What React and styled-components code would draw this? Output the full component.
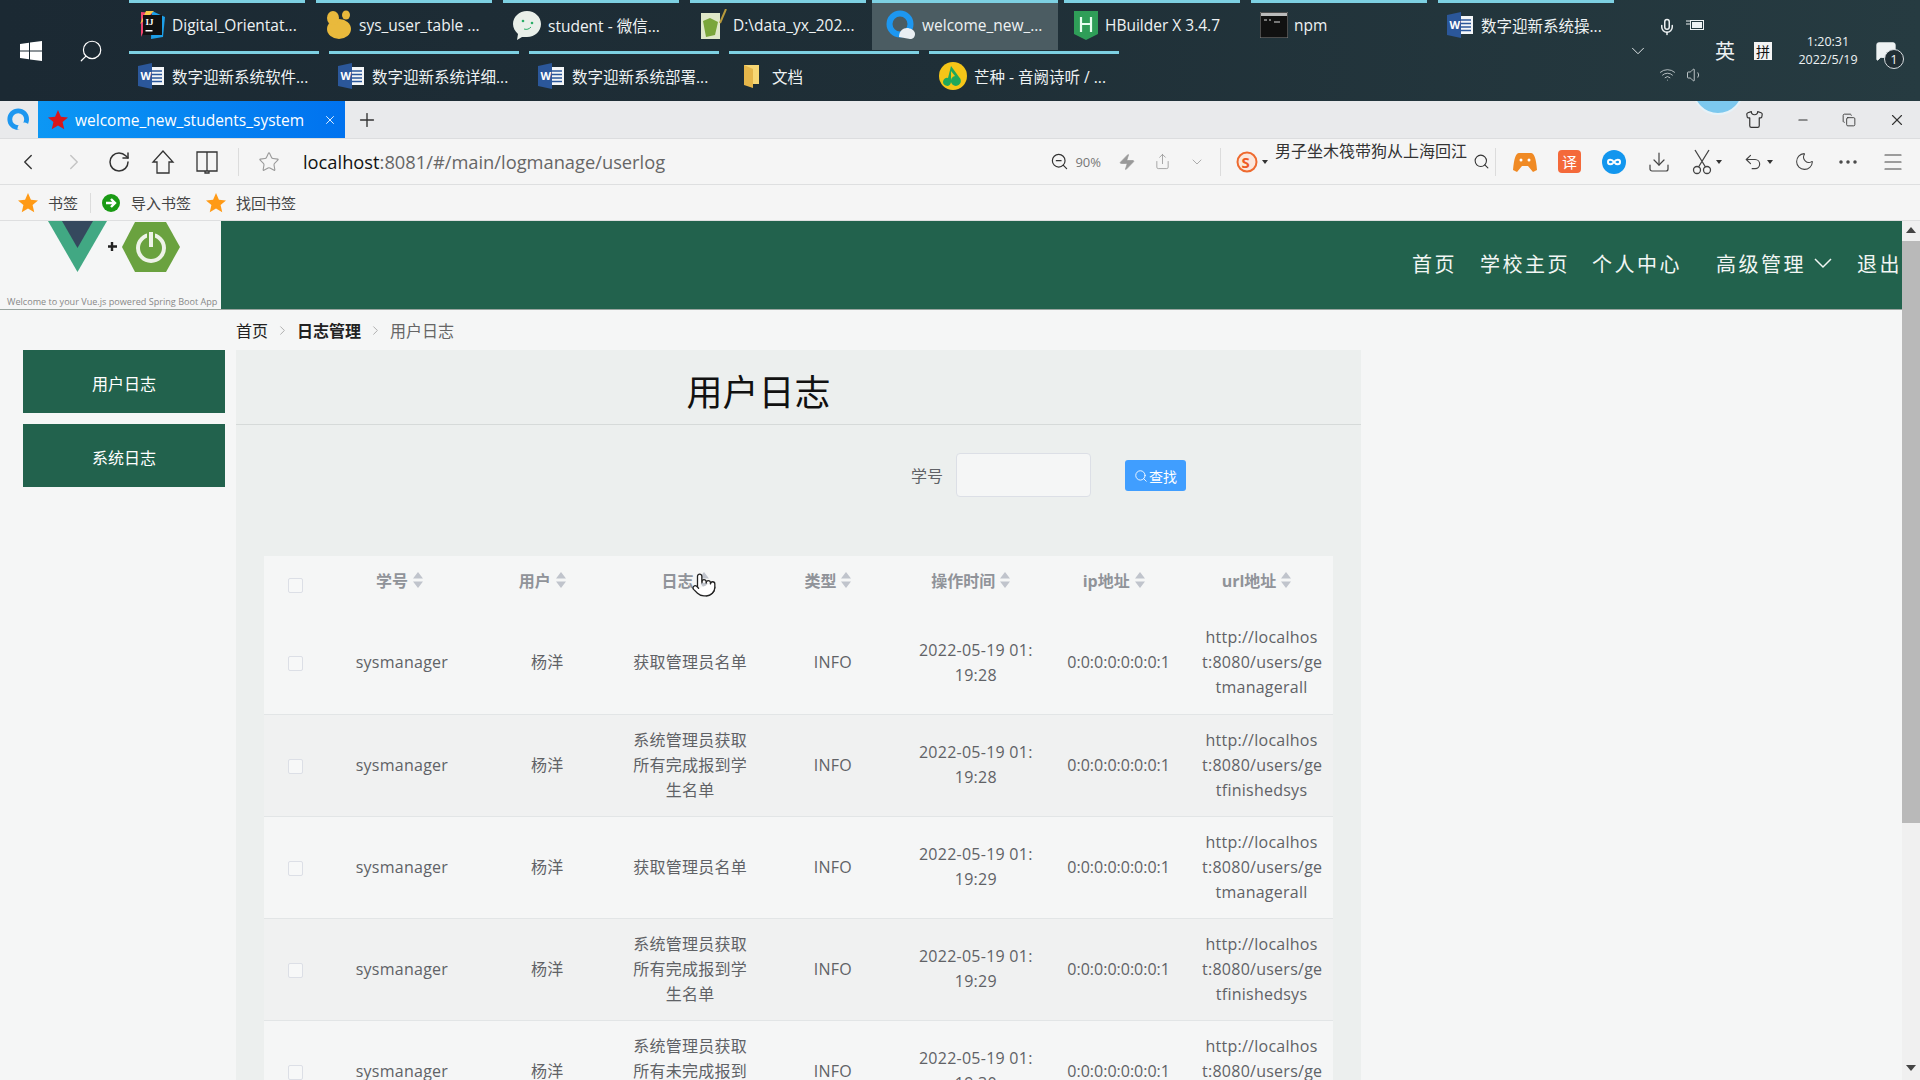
import React from 'react';
import styled, { createGlobalStyle } from 'styled-components';
import {
  ChevronDown, ChevronLeft, ChevronRight, Copy, Download, Ellipsis, Menu, MessageSquare,
  Mic, Minus, Moon, Plus, Pointer, RotateCw, Search, Share, Shirt, Star, Undo2, Volume1, Wifi, X, Zap, ZoomOut,
} from 'lucide-react';

const SANS = `"Open Sans", "Noto Sans CJK SC", sans-serif`;

const GlobalStyle = createGlobalStyle`
  html, body {
    margin: 0;
    height: 100%;
    overflow: hidden;
    background: #f5f6f6;
    font-family: ${SANS};
  }
  * { box-sizing: border-box; }
`;

const Screen = styled.div`
  display: flex;
  flex-direction: column;
  width: 1920px;
  height: 1080px;
  overflow: hidden;
`;

/* windows taskbar */
const Taskbar = styled.div`
  display: flex;
  flex: none;
  height: 101px;
  background: linear-gradient(90deg, #1b2933, #1f2f37 50%, #263b41);
  color: #eef2f3;
`;

const StartArea = styled.div`
  display: flex;
  flex: none;
  width: 129px;
  align-items: center;
  padding-left: 20px;
  gap: 36px;
  color: #fff;
`;

const StartSearch = styled(Search)`
  transform: scaleX(-1);
`;

const TaskRows = styled.div`
  display: flex;
  flex: none;
  width: 1496px;
  flex-direction: column;
  gap: 1px;
`;

const TaskRow = styled.div`
  display: flex;
  height: 50px;
  gap: ${(p) => p.$gap}px;
`;

const TaskItem = styled.div`
  display: flex;
  flex: none;
  align-items: center;
  width: ${(p) => (p.$active ? 186 : p.$width)}px;
  margin: ${(p) => (p.$active ? '0 -5px' : '0')};
  padding: 0 0 3px ${(p) => (p.$active ? 14 : 9)}px;
  gap: 6px;
  border-top: 3px solid #7dd0e2;
  background: ${(p) => (p.$active ? '#4b5c62' : 'transparent')};
  font-size: 15.5px;
  white-space: nowrap;
`;

const Tray = styled.div`
  display: flex;
  flex: 1;
  align-items: center;
  padding-left: 2px;
`;

const TrayIcons = styled.div`
  display: grid;
  grid-template-columns: 28px 28px;
  row-gap: 30px;
  justify-items: center;
  margin-left: 4px;
`;

const ImeLabel = styled.span`
  margin-left: 6px;
  font-size: 20px;
`;

const ImeBox = styled.span`
  display: flex;
  align-items: center;
  justify-content: center;
  width: 18px;
  height: 18px;
  margin-left: 19px;
  background: #f4f4f4;
  color: #111;
  font-size: 14px;
`;

const Clock = styled.div`
  display: flex;
  flex-direction: column;
  align-items: center;
  gap: 3px;
  width: 64px;
  margin-left: 24px;
  font-size: 12.5px;
  line-height: 15px;
`;

const Notify = styled.div`
  position: relative;
  display: flex;
  margin-left: 15px;
`;

const NotifyCount = styled.span`
  position: absolute;
  right: -7px;
  bottom: -7px;
  display: flex;
  align-items: center;
  justify-content: center;
  width: 20px;
  height: 20px;
  border: 1px solid #d8dde0;
  border-radius: 50%;
  background: #202e34;
  font-size: 13px;
`;

/* browser chrome */
const TabBar = styled.div`
  position: relative;
  display: flex;
  flex: none;
  align-items: stretch;
  height: 38px;
  overflow: hidden;
  border-bottom: 1px solid #dcdddf;
  background: #e9eaec;
`;

const BrowserLogo = styled.div`
  display: flex;
  flex: none;
  width: 38px;
  align-items: center;
  justify-content: center;
`;

const ActiveTab = styled.div`
  display: flex;
  flex: none;
  align-items: center;
  width: 307px;
  padding: 0 8px 0 10px;
  background: linear-gradient(90deg, #0c97f4, #0072ef);
  color: #fff;
  font-size: 15.5px;
`;

const TabTitle = styled.span`
  flex: 1;
  margin-left: 7px;
`;

const NewTab = styled.div`
  display: flex;
  align-items: center;
  margin-left: 11px;
  color: #333;
`;

const Bubble = styled.div`
  position: absolute;
  top: -38px;
  right: 176px;
  width: 52px;
  height: 52px;
  border: 2px solid #e6f2f8;
  border-radius: 50%;
  background: #7cc8ee;
`;

const WindowButtons = styled.div`
  display: flex;
  align-items: center;
  gap: 32px;
  margin-left: auto;
  padding-right: 14px;
  color: #333;
`;

const Toolbar = styled.div`
  display: flex;
  flex: none;
  align-items: center;
  height: 46px;
  padding-left: 15px;
  border-bottom: 1px solid #dedfe0;
  background: #f5f5f5;
  color: #333;
`;

const NavGroup = styled.div`
  display: flex;
  align-items: center;
  gap: 20px;
`;

const Divider = styled.span`
  flex: none;
  width: 1px;
  height: ${(p) => p.$height || 28}px;
  margin: 0 ${(p) => p.$gap || 0}px;
  background: #dcdcdc;
`;

const AddressBar = styled.div`
  flex: 1;
  margin-left: 23px;
  color: #666;
  font-size: 18.3px;
`;

const Host = styled.span`
  color: #111;
`;

const ZoomValue = styled.span`
  margin: 0 17px 0 6px;
  color: #777;
  font-size: 13px;
`;

const GreyTools = styled.div`
  display: flex;
  align-items: center;
  gap: 18px;
  color: #999;
`;

const SearchHint = styled.div`
  width: 198px;
  margin: -22px 0 0 7px;
  color: #333;
  font-size: 16px;
  line-height: 22px;
  white-space: nowrap;
`;

const PluginGroup = styled.div`
  display: flex;
  align-items: center;
  gap: 21px;
  padding-right: 15px;
  margin-left: 12px;
  color: #444;
`;

const Translate = styled.span`
  display: flex;
  align-items: center;
  justify-content: center;
  width: 23px;
  height: 23px;
  border-radius: 4px;
  background: #f4693a;
  color: #fff;
  font-size: 15px;
`;

const ToolPair = styled.span`
  display: flex;
  align-items: center;
  gap: 4px;
`;

const Caret = styled.span`
  flex: none;
  width: 0;
  height: 0;
  border-top: 4px solid #333;
  border-left: 3px solid transparent;
  border-right: 3px solid transparent;
`;

const Bookmarks = styled.div`
  display: flex;
  flex: none;
  align-items: center;
  height: 36px;
  padding-left: 18px;
  border-bottom: 1px solid #dedfe0;
  background: #f5f5f5;
  color: #444;
  font-size: 15px;
`;

const BookmarkItem = styled.span`
  display: flex;
  align-items: center;
  gap: ${(p) => p.$gap}px;
  margin-right: ${(p) => p.$after}px;
`;

/* web page */
const PageArea = styled.div`
  display: flex;
  flex: 1;
  min-height: 0;
`;

const Page = styled.div`
  flex: 1;
  min-width: 0;
`;

const TopNav = styled.header`
  display: flex;
  height: 89px;
  border-bottom: 1px solid #9aa5a0;
  background: #22624d;
`;

const Logo = styled.div`
  display: flex;
  flex: none;
  flex-direction: column;
  width: 221px;
  overflow: hidden;
  background: #f5f6f6;
`;

const LogoCaption = styled.span`
  margin: 22px 0 0 7px;
  color: #888;
  font-size: 9.1px;
  line-height: 14px;
  white-space: nowrap;
`;

const NavLinks = styled.nav`
  display: flex;
  flex: 1;
  align-items: center;
  justify-content: flex-end;
  padding-bottom: 4px;
  overflow: hidden;
  color: #f2f6f4;
  font-size: 20px;
  letter-spacing: 2.5px;
`;

const NavLink = styled.span`
  display: flex;
  flex: none;
  align-items: center;
  gap: 8px;
  margin-left: ${(p) => p.$left}px;
  white-space: nowrap;
`;

const Body = styled.div`
  display: flex;
  padding-left: 23px;
`;

const Sidebar = styled.aside`
  display: flex;
  flex: none;
  flex-direction: column;
  gap: 11px;
  width: 202px;
  padding-top: 40px;
`;

const SideButton = styled.div`
  display: flex;
  align-items: center;
  justify-content: center;
  height: 63px;
  padding-top: 2px;
  background: #22624d;
  color: #fff;
  font-size: 16px;
`;

const Content = styled.main`
  width: 1125px;
  margin-left: 11px;
`;

const Breadcrumb = styled.div`
  display: flex;
  align-items: center;
  height: 40px;
  font-size: 16px;
`;

const Crumb = styled.span`
  color: ${(p) => (p.$current ? '#666' : '#222')};
  font-weight: ${(p) => (p.$strong ? 700 : 400)};
`;

const CrumbSep = styled.span`
  display: flex;
  margin: 0 7px;
  color: #aaa;
`;

const Panel = styled.section`
  height: 730px;
  background: #ecefee;
`;

const Title = styled.h1`
  height: 75px;
  margin: 0;
  padding-right: 80px;
  border-bottom: 1px solid #d6dad9;
  color: #111;
  font-size: 36px;
  font-weight: 400;
  line-height: 85px;
  text-align: center;
`;

const SearchForm = styled.div`
  display: flex;
  align-items: center;
  height: 44px;
  margin-top: 28px;
  padding-left: 675px;
`;

const FieldLabel = styled.label`
  color: #606266;
  font-size: 16px;
`;

const FieldInput = styled.input`
  width: 135px;
  height: 44px;
  margin-left: 13px;
  border: 1px solid #dcdfe6;
  border-radius: 4px;
  background: #f5f6f6;
`;

const SearchButton = styled.button`
  display: flex;
  align-items: center;
  justify-content: center;
  gap: 1px;
  width: 61px;
  height: 31px;
  margin: 1px 0 0 34px;
  padding: 0;
  border: 0;
  border-radius: 3px;
  background: #409eff;
  color: #fff;
  font-family: ${SANS};
  font-size: 14px;
`;

const TableWrap = styled.div`
  position: relative;
  width: 1069px;
  margin: 59px 0 0 28px;
`;

const Table = styled.table`
  width: 100%;
  border-collapse: collapse;
  table-layout: fixed;
  background: #f5f6f6;
`;

const CheckCol = styled.col`
  width: 69px;
`;

const HeadCell = styled.th`
  height: 56px;
  padding: 0 10px 8px 0;
  color: #909399;
  font-size: 16px;
  font-weight: 700;
  text-align: center;
  white-space: nowrap;
`;

const Row = styled.tr`
  height: 102px;
  border-bottom: 1px solid #e2e5e6;
  background: ${(p) => (p.$even ? '#f0f1f1' : '#f5f6f6')};
`;

const Cell = styled.td`
  padding: 0 12px;
  color: #606266;
  font-size: 16px;
  letter-spacing: ${(p) => (p.$tight ? 0 : 0.25)}px;
  line-height: 25px;
  text-align: center;
  word-break: break-all;
`;

const UserCell = styled(Cell)`
  padding-right: 17px;
`;

const CellLine = styled.span`
  display: block;
  white-space: nowrap;
`;

const Checkbox = styled.span`
  display: block;
  width: 15px;
  height: 15px;
  margin: ${(p) => (p.$head ? '10px auto 0 24px' : '2px auto 0 12px')};
  border: 1px solid #dcdfe6;
  border-radius: 2px;
  background: #f7f8f8;
`;

const HeadLabel = styled.span`
  display: inline-flex;
  align-items: center;
  gap: 5px;
`;

const CursorHand = styled.span`
  position: absolute;
  top: 16px;
  left: 427px;
  display: flex;
  color: #222;
`;

const ScrollTrack = styled.div`
  display: flex;
  flex: none;
  flex-direction: column;
  align-items: center;
  width: 18px;
  background: #f0f0f0;
`;

const ScrollArrow = styled.span`
  flex: none;
  width: 0;
  height: 0;
  margin: ${(p) => (p.$down ? '242px 0 6px' : '6px 0 8px')};
  border-left: 5px solid transparent;
  border-right: 5px solid transparent;
  border-bottom: ${(p) => (p.$down ? '0' : '6px solid #444')};
  border-top: ${(p) => (p.$down ? '6px solid #444' : '0')};
`;

const ScrollThumb = styled.span`
  flex: none;
  width: 18px;
  height: 582px;
  background: #b9b9b9;
`;

const WindowsIcon = () => (
  <svg width="22" height="20" viewBox="0 0 22 20" fill="#fff">
    <path d="M0 3l9-1.300V9.500H0zM10 1.500L22 0v9.500H10zM0 10.500h9v7.800L0 17zM10 10.500h12V20l-12-1.600z" />
  </svg>
);

const WordIcon = () => (
  <svg width="28" height="26" viewBox="0 0 28 26">
    <rect x="10" y="4" width="16" height="18" fill="#f4f6f8" />
    <path d="M14 8h10M14 11.500h10M14 15h10M14 18.500h10" stroke="#2b579a" strokeWidth="1.600" />
    <path d="M0 3l14-3v26L0 23z" fill="#2b579a" />
    <text x="2.500" y="17" fill="#fff" fontSize="11" fontWeight="700" fontFamily="Open Sans, sans-serif">W</text>
  </svg>
);

const IdeaIcon = () => (
  <svg width="28" height="30" viewBox="0 0 28 30">
    <path d="M3 2l11 1-11 24z" fill="#f0436f" />
    <path d="M14 1l13 6-2 20-12 2z" fill="#1d9fe8" />
    <path d="M2 14L8 1h8z" fill="#f7c948" />
    <rect x="5" y="5" width="19" height="20" fill="#111" />
    <text x="7.500" y="15" fill="#fff" fontSize="9" fontWeight="700" fontFamily="Liberation Serif, serif">IJ</text>
    <rect x="7.500" y="20" width="7" height="1.500" fill="#fff" />
  </svg>
);

const NavicatIcon = () => (
  <svg width="28" height="30" viewBox="0 0 28 30" fill="#e9b93c">
    <ellipse cx="14" cy="19" rx="12" ry="10" />
    <ellipse cx="8" cy="8" rx="6" ry="7" />
    <ellipse cx="21" cy="5" rx="4" ry="4.500" />
  </svg>
);

const WechatIcon = () => (
  <svg width="30" height="30" viewBox="0 0 30 30">
    <path d="M15 1c8 0 14 6 14 13s-6 13-14 13c-2 0-4 0-5 0l-5 3 1-6C3 21 1 18 1 14 1 7 7 1 15 1z" fill="#e9efe9" />
    <circle cx="11" cy="11" r="1.300" fill="#2aae67" />
    <circle cx="20" cy="13" r="1.300" fill="#2aae67" />
    <path d="M12 19c3 1 5 0 7-2" stroke="#2aae67" fill="none" />
  </svg>
);

const NotepadIcon = () => (
  <svg width="28" height="32" viewBox="0 0 28 32">
    <rect x="2" y="4" width="19" height="26" fill="#dfe8c8" />
    <path d="M4 12l7-3 8 4-3 13-9 2z" fill="#7aa63a" />
    <path d="M21 14L27 0" stroke="#b79a3c" strokeWidth="2" />
  </svg>
);

const QBrowserIcon = ({ size = 30 }) => (
  <svg width={size} height={size} viewBox="0 0 30 30">
    <circle cx="14" cy="14" r="10.500" fill="none" stroke="#1d97f0" strokeWidth="6" />
    <path d="M13 27c0-6 4-9 8-9 3 0 8 2 8 6 0 3-2 5-5 5z" fill={size > 26 ? '#e9eef2' : '#e9eaec'} />
  </svg>
);

const HBuilderIcon = () => (
  <svg width="26" height="30" viewBox="0 0 26 30">
    <path d="M1 1h24v23l-12 6-12-6z" fill="#2f9e58" />
    <path d="M8 7v15M18 7v15M8 14h10" stroke="#e8fff0" strokeWidth="2.200" />
  </svg>
);

const CmdIcon = () => (
  <svg width="28" height="26" viewBox="0 0 28 26">
    <rect x="0" y="0" width="28" height="26" fill="#111" stroke="#888" />
    <rect x="1" y="1" width="26" height="3" fill="#bbb" />
    <path d="M4 8h3M9 8h2M14 10h6" stroke="#ddd" />
  </svg>
);

const FolderIcon = () => (
  <svg width="28" height="28" viewBox="0 0 28 28">
    <path d="M6 3h15v19H6z" fill="#f7d774" />
    <path d="M6 3l9 4v19l-9-3z" fill="#e5b64a" />
  </svg>
);

const MusicIcon = () => (
  <svg width="30" height="30" viewBox="0 0 30 30">
    <circle cx="15" cy="15" r="14" fill="#f5c518" />
    <path d="M13 5l8 11a5 5 0 1 1-4-1l-4-5v11a4 4 0 1 1-3-4z" fill="#1fa85b" />
  </svg>
);

const BatteryIcon = () => (
  <svg width="20" height="14" viewBox="0 0 20 14">
    <rect x="5.500" y="2.500" width="13" height="9" fill="none" stroke="#eef2f3" />
    <rect x="7" y="4" width="10" height="6" fill="#eef2f3" />
    <path d="M1 3h4M1 6h4" stroke="#eef2f3" />
  </svg>
);

const HomeIcon = () => (
  <svg width="24" height="26" viewBox="0 0 24 26" fill="none" stroke="currentColor" strokeWidth="1.300">
    <path d="M12 2L2 13h4v11h12V13h4z" />
  </svg>
);

const BookIcon = () => (
  <svg width="24" height="26" viewBox="0 0 24 26" fill="none" stroke="currentColor" strokeWidth="1.300">
    <path d="M2 3h10v19H2zM12 3h10v19H12zM10 22v2h4v-2" />
  </svg>
);

const ScissorsIcon = () => (
  <svg width="20" height="26" viewBox="0 0 20 26" fill="none" stroke="currentColor" strokeWidth="1.300">
    <circle cx="5" cy="21" r="3.500" />
    <circle cx="15" cy="21" r="3.500" />
    <path d="M3 1l10.500 17M17 1L6.500 18" />
  </svg>
);

const SogouIcon = () => (
  <svg width="22" height="24" viewBox="0 0 22 24">
    <circle cx="11" cy="12" r="9.500" fill="#fbe7dc" stroke="#ee6a2f" strokeWidth="2" />
    <text x="5.500" y="17.500" fill="#ee5a24" fontSize="15" fontWeight="700" fontFamily="Open Sans, sans-serif">S</text>
  </svg>
);

const GamepadIcon = () => (
  <svg width="24" height="20" viewBox="0 0 24 20">
    <path d="M6 1h12c3 0 5 5 6 17l-4 2-5-6H9l-5 6-4-2C1 6 3 1 6 1z" fill="#f08a24" />
    <circle cx="8" cy="8" r="1.500" fill="#fff" />
    <circle cx="16" cy="8" r="1.500" fill="#fff" />
  </svg>
);

const InfinityIcon = () => (
  <svg width="24" height="24" viewBox="0 0 24 24">
    <circle cx="12" cy="12" r="12" fill="#1296ee" />
    <path d="M12 12c-2-3-6-3-6 0s4 3 6 0 6-3 6 0-4 3-6 0z" fill="none" stroke="#fff" strokeWidth="2" />
  </svg>
);

const ImportIcon = () => (
  <svg width="18" height="18" viewBox="0 0 18 18">
    <circle cx="9" cy="9" r="9" fill="#1a9a14" />
    <path d="M4 9h8M9 5l4 4-4 4" fill="none" stroke="#fff" strokeWidth="2.400" />
  </svg>
);

const RedStar = () => (
  <svg width="20" height="20" viewBox="0 0 24 24">
    <path d="M12 0l3.500 8.200 8.500.7-6.500 5.600 2 8.500L12 18.500 4.500 23l2-8.500L0 8.900l8.500-.7z" fill="#d8161b" />
  </svg>
);

const OrangeStar = () => (
  <svg width="20" height="20" viewBox="0 0 24 24">
    <path d="M12 0l3.500 8.200 8.500.7-6.500 5.600 2 8.500L12 18.500 4.500 23l2-8.500L0 8.900l8.500-.7z" fill="#ff9a16" />
  </svg>
);

const VueSpringLogo = () => (
  <svg width="221" height="52" viewBox="0 0 221 52">
    <path d="M48 0h59L77.500 51z" fill="#41a883" />
    <path d="M62 0h31L77.500 27z" fill="#35495e" />
    <path d="M112 21v9M108 25.500h9" stroke="#222" strokeWidth="2.400" />
    <path d="M135 1h31l14 25-14 25h-31l-13-25z" fill="#6aa23f" />
    <circle cx="151" cy="27" r="13" fill="none" stroke="#eef3e8" strokeWidth="4" />
    <path d="M151 11v15" stroke="#6aa23f" strokeWidth="8" />
    <path d="M151 11v15" stroke="#eef3e8" strokeWidth="4" />
  </svg>
);

const NavChevron = () => (
  <svg width="18" height="11" viewBox="0 0 18 11" fill="none" stroke="currentColor" strokeWidth="1.500">
    <path d="M1 1l8 8 8-8" />
  </svg>
);

const SortCaret = () => (
  <svg width="10" height="16" viewBox="0 0 10 16" fill="#c0c4cc">
    <path d="M5 0l5 6.500H0zM5 16l-5-6.500h10z" />
  </svg>
);

const firstRow = [
  { icon: <IdeaIcon />, label: 'Digital_Orientat...' },
  { icon: <NavicatIcon />, label: 'sys_user_table ...' },
  { icon: <WechatIcon />, label: 'student - 微信...' },
  { icon: <NotepadIcon />, label: 'D:\\data_yx_202...' },
  { icon: <QBrowserIcon />, label: 'welcome_new_...', active: true },
  { icon: <HBuilderIcon />, label: 'HBuilder X 3.4.7' },
  { icon: <CmdIcon />, label: 'npm' },
  { icon: <WordIcon />, label: '数字迎新系统操...' },
];

const secondRow = [
  { icon: <WordIcon />, label: '数字迎新系统软件...' },
  { icon: <WordIcon />, label: '数字迎新系统详细...' },
  { icon: <WordIcon />, label: '数字迎新系统部署...' },
  { icon: <FolderIcon />, label: '文档' },
  { icon: <MusicIcon />, label: '芒种 - 音阙诗听 / ...' },
];

const columns = ['学号', '用户', '日志', '类型', '操作时间', 'ip地址', 'url地址'];

const LOG_ALL = '获取管理员名单';
const LOG_DONE = '系统管理员获取所有完成报到学生名单';
const LOG_UNDONE = '系统管理员获取所有未完成报到学生名单';

const URL_ALL = ['http://localhos', 't:8080/users/ge', 'tmanagerall'];
const URL_DONE = ['http://localhos', 't:8080/users/ge', 'tfinishedsys'];
const URL_UNDONE = ['http://localhos', 't:8080/users/ge', 'tunfinishedsys'];

const logs = [
  { log: LOG_ALL, time: '19:28', url: URL_ALL },
  { log: LOG_DONE, time: '19:28', url: URL_DONE },
  { log: LOG_ALL, time: '19:29', url: URL_ALL },
  { log: LOG_DONE, time: '19:29', url: URL_DONE },
  { log: LOG_UNDONE, time: '19:30', url: URL_UNDONE },
];

function App() {
  return (
    <Screen>
      <GlobalStyle />
      <Taskbar>
        <StartArea>
          <WindowsIcon />
          <StartSearch size={26} strokeWidth={1.1} />
        </StartArea>
        <TaskRows>
          <TaskRow $gap={11}>
            {firstRow.map((item) => (
              <TaskItem key={item.label} $width={176} $active={item.active}>
                {item.icon}
                {item.label}
              </TaskItem>
            ))}
          </TaskRow>
          <TaskRow $gap={10}>
            {secondRow.map((item) => (
              <TaskItem key={item.label} $width={190}>
                {item.icon}
                {item.label}
              </TaskItem>
            ))}
          </TaskRow>
        </TaskRows>
        <Tray>
          <ChevronDown size={22} strokeWidth={1} />
          <TrayIcons>
            <Mic size={18} strokeWidth={2} />
            <BatteryIcon />
            <Wifi size={17} strokeWidth={1} />
            <Volume1 size={18} strokeWidth={1} />
          </TrayIcons>
          <ImeLabel>英</ImeLabel>
          <ImeBox>拼</ImeBox>
          <Clock>
            <span>1:20:31</span>
            <span>2022/5/19</span>
          </Clock>
          <Notify>
            <MessageSquare size={22} fill="#eef2f3" strokeWidth={1} />
            <NotifyCount>1</NotifyCount>
          </Notify>
        </Tray>
      </Taskbar>

      <TabBar>
        <BrowserLogo>
          <QBrowserIcon size={24} />
        </BrowserLogo>
        <ActiveTab>
          <RedStar />
          <TabTitle>welcome_new_students_system</TabTitle>
          <X size={14} strokeWidth={1.5} />
        </ActiveTab>
        <NewTab>
          <Plus size={22} strokeWidth={1.5} />
        </NewTab>
        <Bubble />
        <WindowButtons>
          <Shirt size={19} strokeWidth={1.5} />
          <Minus size={14} strokeWidth={2} />
          <Copy size={14} strokeWidth={1.5} />
          <X size={18} strokeWidth={1.5} />
        </WindowButtons>
      </TabBar>

      <Toolbar>
        <NavGroup>
          <ChevronLeft size={26} strokeWidth={1.3} />
          <ChevronRight size={26} strokeWidth={1.3} color="#c4c4c4" />
          <RotateCw size={24} strokeWidth={1.5} />
          <HomeIcon />
          <BookIcon />
        </NavGroup>
        <Divider $gap={19} />
        <Star size={22} strokeWidth={1.2} color="#999" />
        <AddressBar>
          <Host>localhost</Host>:8081/#/main/logmanage/userlog
        </AddressBar>
        <ZoomOut size={19} strokeWidth={1.5} />
        <ZoomValue>90%</ZoomValue>
        <GreyTools>
          <Zap size={18} fill="#999" strokeWidth={1} />
          <Share size={17} strokeWidth={1.2} />
          <ChevronDown size={16} strokeWidth={1.2} />
        </GreyTools>
        <Divider $gap={15} />
        <ToolPair>
          <SogouIcon />
          <Caret />
        </ToolPair>
        <SearchHint>男子坐木筏带狗从上海回江</SearchHint>
        <Search size={17} strokeWidth={1.5} />
        <Divider $gap={5} />
        <PluginGroup>
          <GamepadIcon />
          <Translate>译</Translate>
          <InfinityIcon />
          <Download size={24} strokeWidth={1.2} />
          <ToolPair>
            <ScissorsIcon />
            <Caret />
          </ToolPair>
          <ToolPair>
            <Undo2 size={20} strokeWidth={1.4} />
            <Caret />
          </ToolPair>
          <Moon size={21} strokeWidth={1.2} />
          <Ellipsis size={24} strokeWidth={1.5} />
          <Menu size={24} strokeWidth={1.2} />
        </PluginGroup>
      </Toolbar>

      <Bookmarks>
        <BookmarkItem $gap={10} $after={12}>
          <OrangeStar />
          书签
        </BookmarkItem>
        <Divider $height={20} />
        <BookmarkItem $gap={11} $after={15}>
          <span />
          <ImportIcon />
          导入书签
        </BookmarkItem>
        <BookmarkItem $gap={10} $after={0}>
          <OrangeStar />
          找回书签
        </BookmarkItem>
      </Bookmarks>

      <PageArea>
        <Page>
          <TopNav>
            <Logo>
              <VueSpringLogo />
              <LogoCaption>Welcome to your Vue.js powered Spring Boot App</LogoCaption>
            </Logo>
            <NavLinks>
              <NavLink $left={0}>首页</NavLink>
              <NavLink $left={23}>学校主页</NavLink>
              <NavLink $left={22}>个人中心</NavLink>
              <NavLink $left={34}>
                高级管理
                <NavChevron />
              </NavLink>
              <NavLink $left={25}>退出</NavLink>
            </NavLinks>
          </TopNav>
          <Body>
            <Sidebar>
              <SideButton>用户日志</SideButton>
              <SideButton>系统日志</SideButton>
            </Sidebar>
            <Content>
              <Breadcrumb>
                <Crumb>首页</Crumb>
                <CrumbSep>
                  <ChevronRight size={15} strokeWidth={1.5} />
                </CrumbSep>
                <Crumb $strong>日志管理</Crumb>
                <CrumbSep>
                  <ChevronRight size={15} strokeWidth={1.5} />
                </CrumbSep>
                <Crumb $current>用户日志</Crumb>
              </Breadcrumb>
              <Panel>
                <Title>用户日志</Title>
                <SearchForm>
                  <FieldLabel>学号</FieldLabel>
                  <FieldInput />
                  <SearchButton>
                    <Search size={14} strokeWidth={1.5} />
                    查找
                  </SearchButton>
                </SearchForm>
                <TableWrap>
                  <Table>
                    <colgroup>
                      <CheckCol />
                    </colgroup>
                    <thead>
                      <tr>
                        <HeadCell>
                          <Checkbox $head />
                        </HeadCell>
                        {columns.map((name) => (
                          <HeadCell key={name}>
                            <HeadLabel>
                              {name}
                              <SortCaret />
                            </HeadLabel>
                          </HeadCell>
                        ))}
                      </tr>
                    </thead>
                    <tbody>
                      {logs.map((row, i) => (
                        <Row key={i} $even={i % 2 === 1}>
                          <Cell>
                            <Checkbox />
                          </Cell>
                          <UserCell>sysmanager</UserCell>
                          <Cell>杨洋</Cell>
                          <Cell>{row.log}</Cell>
                          <Cell>INFO</Cell>
                          <Cell>
                            <CellLine>2022-05-19 01:</CellLine>
                            <CellLine>{row.time}</CellLine>
                          </Cell>
                          <Cell $tight>0:0:0:0:0:0:0:1</Cell>
                          <Cell>
                            {row.url.map((line) => (
                              <CellLine key={line}>{line}</CellLine>
                            ))}
                          </Cell>
                        </Row>
                      ))}
                    </tbody>
                  </Table>
                  <CursorHand>
                    <Pointer size={26} fill="#fff" strokeWidth={1.2} />
                  </CursorHand>
                </TableWrap>
              </Panel>
            </Content>
          </Body>
        </Page>
        <ScrollTrack>
          <ScrollArrow />
          <ScrollThumb />
          <ScrollArrow $down />
        </ScrollTrack>
      </PageArea>
    </Screen>
  );
}

export default App;
